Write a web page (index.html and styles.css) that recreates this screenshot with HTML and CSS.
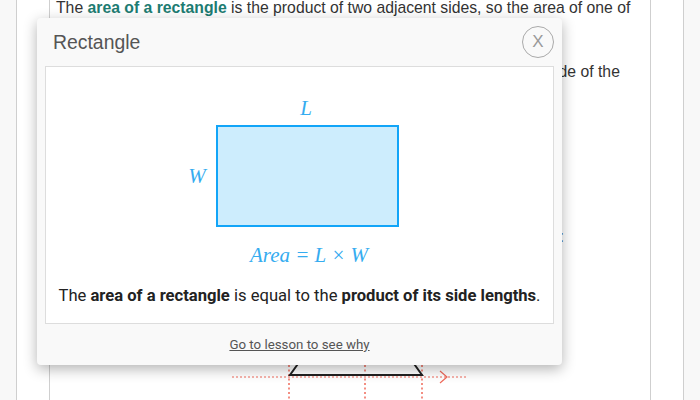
FILE: index.html
```html
<!DOCTYPE html>
<html>
<head>
  <meta charset="utf-8">
  <link rel="stylesheet" href="styles.css">
</head>
<body>

  <div class="page">
    <div class="content">
      <div class="line">The <b class="term">area of a rectangle</b> is the product of two adjacent sides, so the area of one of</div>
      <div class="line">these squares is</div>
      <div class="line">equal to the length of the one side multiplied by the length of the other side of the</div>
      <div class="line">square.</div>
      <div class="line">&nbsp;</div>
      <div class="line">&nbsp;</div>
      <div class="line">&nbsp;</div>
      <div class="line lower">Below is how the rectangle is split into equal squares of area 1 unit each:</div>

      <svg class="figure" width="601" height="60" viewBox="0 0 601 60">
        <line x1="182" y1="21" x2="418" y2="21" stroke="#f0695a" stroke-width="1.2" stroke-dasharray="2 2"/>
        <polyline points="390,15 397,21 390,27" fill="none" stroke="#f0695a" stroke-width="1.2"/>
        <line x1="239" y1="0" x2="239" y2="60" stroke="#f0695a" stroke-width="1.5" stroke-dasharray="2 2.5"/>
        <line x1="315" y1="0" x2="315" y2="60" stroke="#f0695a" stroke-width="1.5" stroke-dasharray="2 2.5"/>
        <line x1="372" y1="0" x2="372" y2="60" stroke="#f0695a" stroke-width="1.5" stroke-dasharray="2 2.5"/>
        <polyline points="250,5 240,19 372,19 362,5" fill="none" stroke="#222" stroke-width="2"/>
      </svg>
    </div>
  </div>

  <div class="modal">
    <div class="modal-header">
      <span class="modal-title">Rectangle</span>
      <span class="close">X</span>
    </div>
    <div class="panel">
      <svg class="diagram" width="507" height="206" viewBox="0 0 507 206">
        <rect x="171" y="59" width="181" height="100" fill="#cdedfd" stroke="#12a5f8" stroke-width="2"/>
        <text x="260" y="48" class="math" text-anchor="middle">L</text>
        <text x="151" y="116" class="math" text-anchor="middle">W</text>
        <text x="263" y="195" class="math" text-anchor="middle">Area = L × W</text>
      </svg>
      <p class="summary">The <b>area of a rectangle</b> is equal to the <b>product of its side lengths</b>.</p>
    </div>
    <div class="modal-footer">
      <a href="#" class="lesson-link">Go to lesson to see why</a>
    </div>
  </div>

</body>
</html>
```

FILE: styles.css
```css
body {
  margin: 0;
  background-color: #f8f8f8;
  font-family: "Liberation Sans", Arial, sans-serif;
  color: #333;
  overflow: hidden;
}

.page {
  margin-left: 16px;
  width: 666px;
  height: 400px;
  background-color: white;
  border-left: 1px solid #cfcfcf;
  border-right: 1px solid #cfcfcf;
}

.content {
  margin-left: 32px;
  width: 594px;
  height: 400px;
  padding-left: 6px;
  border-left: 1px solid #cfcfcf;
  border-right: 1px solid #cfcfcf;
}

.line {
  font-size: 15.75px;
  line-height: 16px;
  height: 32px;
  white-space: nowrap;
}

.lower {
  margin-top: 5px;
  height: 27px;
}

.term {
  color: #1d7c72;
}

.figure {
  display: block;
  margin-left: -6px;
  margin-top: 100px;
}

.modal {
  position: absolute;
  left: 37px;
  top: 18px;
  width: 525px;
  height: 347px;
  background-color: #f9f9f9;
  border-radius: 4px;
  box-shadow: 0 4px 14px rgba(0, 0, 0, 0.3);
  display: flex;
  flex-direction: column;
}

.modal-header {
  height: 48px;
  display: flex;
  align-items: center;
  justify-content: space-between;
  padding: 0 8px 0 16px;
}

.modal-title {
  font-size: 19.4px;
  color: #555;
}

.close {
  width: 30px;
  height: 30px;
  border: 1px solid #aaa;
  border-radius: 50%;
  display: flex;
  align-items: center;
  justify-content: center;
  font-size: 17px;
  color: #999;
}

.panel {
  margin: 0 8px;
  height: 256px;
  background-color: white;
  border: 1px solid #ddd;
}

.diagram {
  display: block;
}

.math {
  font-family: "Liberation Serif", "Times New Roman", serif;
  font-style: italic;
  font-size: 21px;
  fill: #35acf0;
}

.summary {
  margin: 13px 0 0 0;
  text-align: center;
  font-family: Roboto, sans-serif;
  font-size: 16.6px;
  color: #222;
}

.modal-footer {
  flex: 1;
  display: flex;
  align-items: center;
  justify-content: center;
}

.lesson-link {
  font-family: Roboto, sans-serif;
  font-size: 13.3px;
  color: #555;
}
```
